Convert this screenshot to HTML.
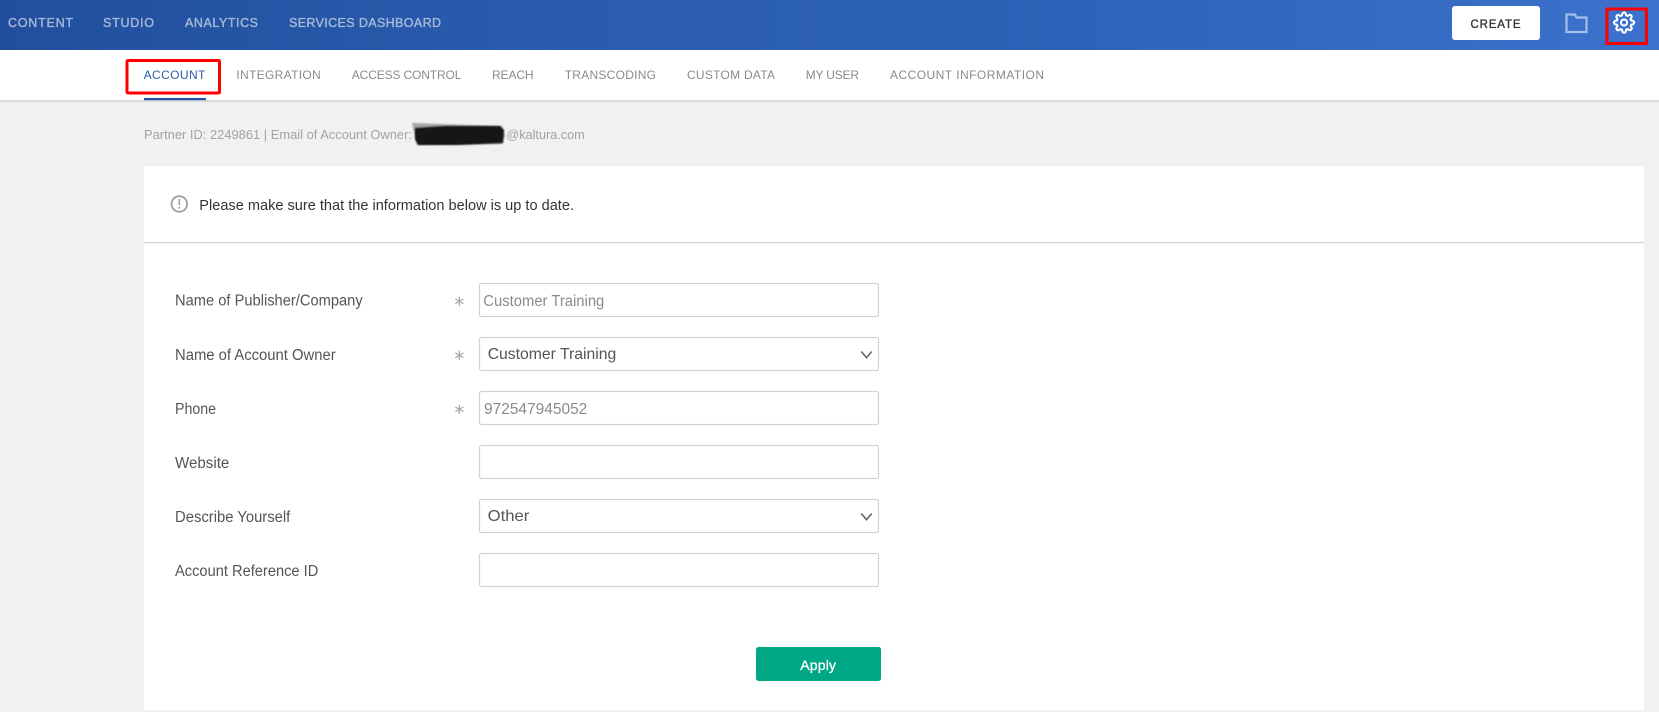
<!DOCTYPE html>
<html lang="en">
<head>
<meta charset="utf-8">
<title>Account Settings</title>
<style>
html,body{margin:0;padding:0;background:#f1f1f1;overflow:hidden;width:1659px;height:712px}
svg{display:block}
text{font-family:"Liberation Sans",Arial,sans-serif}
.top{font-size:12.5px;fill:#a8bad9;stroke:#a8bad9;stroke-width:.35}
.sub{font-size:12px;fill:#8a8a8a}
.lab{font-size:15.5px;fill:#555}
.val{font-size:15.5px;fill:#8a8a8a}
.sel{font-size:16px;fill:#555}
.inp{fill:#fff;stroke:#d2d2d2;stroke-width:1.200}
.ast{font-size:15px;fill:#aaa;font-family:"DejaVu Sans",sans-serif}
</style>
</head>
<body>
<svg width="1659" height="712" viewBox="0 0 1659 712" xmlns="http://www.w3.org/2000/svg">
<defs>
<linearGradient id="hd" x1="0" x2="1" y1="0" y2="0">
<stop offset="0" stop-color="#214f9e"/>
<stop offset=".35" stop-color="#2a5cae"/>
<stop offset=".65" stop-color="#2d63b8"/>
<stop offset="1" stop-color="#3c72cc"/>
</linearGradient>
<filter id="bl" x="-5%" y="-20%" width="110%" height="140%"><feGaussianBlur stdDeviation=".8"/></filter>
</defs>
<rect width="1659" height="712" fill="#f1f1f1"/>
<rect width="1659" height="50" fill="url(#hd)"/>
<text class="top" x="8" y="27" textLength="65" lengthAdjust="spacing">CONTENT</text>
<text class="top" x="103" y="27" textLength="51" lengthAdjust="spacing">STUDIO</text>
<text class="top" x="185" y="27" textLength="73" lengthAdjust="spacing">ANALYTICS</text>
<text class="top" x="289" y="27" textLength="152" lengthAdjust="spacing">SERVICES DASHBOARD</text>

<rect x="1452" y="6" width="88" height="34" rx="3" fill="#fff"/>
<text x="1470.5" y="28" font-size="11.5" fill="#333" stroke="#333" stroke-width=".35" textLength="50" lengthAdjust="spacing">CREATE</text>
<path d="M1566.5 14.500h8.500l1.500 3h10v14.500h-20z" fill="none" stroke="#a7bdea" stroke-width="2.200"/>
<g transform="translate(1613 11.500) scale(.92)" fill="none" stroke="#fff" stroke-width="2.300">
<circle cx="12" cy="12" r="3.300"/>
<path d="M19.400 15a1.650 1.650 0 0 0 .33 1.820l.06.06a2 2 0 0 1 0 2.830 2 2 0 0 1-2.830 0l-.06-.06a1.650 1.650 0 0 0-1.820-.33 1.650 1.650 0 0 0-1 1.510V21a2 2 0 0 1-2 2 2 2 0 0 1-2-2v-.09A1.650 1.650 0 0 0 9 19.400a1.650 1.650 0 0 0-1.820.33l-.06.06a2 2 0 0 1-2.830 0 2 2 0 0 1 0-2.830l.06-.06a1.650 1.650 0 0 0 .33-1.820 1.650 1.650 0 0 0-1.510-1H3a2 2 0 0 1-2-2 2 2 0 0 1 2-2h.09A1.650 1.650 0 0 0 4.600 9a1.650 1.650 0 0 0-.33-1.820l-.06-.06a2 2 0 0 1 0-2.830 2 2 0 0 1 2.830 0l.06.06a1.650 1.650 0 0 0 1.820.33H9a1.650 1.650 0 0 0 1-1.510V3a2 2 0 0 1 2-2 2 2 0 0 1 2 2v.09a1.650 1.650 0 0 0 1 1.510 1.650 1.650 0 0 0 1.820-.33l.06-.06a2 2 0 0 1 2.830 0 2 2 0 0 1 0 2.830l-.06.06a1.650 1.650 0 0 0-.33 1.820V9a1.650 1.650 0 0 0 1.510 1H21a2 2 0 0 1 2 2 2 2 0 0 1-2 2h-.09a1.650 1.650 0 0 0-1.510 1z"/>
</g>
<rect x="1607" y="9" width="39.500" height="34.500" fill="none" stroke="#f00" stroke-width="3"/>

<rect y="50" width="1659" height="50" fill="#fff"/>
<rect y="100" width="1659" height="2" fill="#dcdcdc"/>
<text class="sub" style="fill:#2f5ba8" x="143.600" y="79" textLength="61.800" lengthAdjust="spacing">ACCOUNT</text>
<text class="sub" x="236.400" y="79" textLength="84.300" lengthAdjust="spacing">INTEGRATION</text>
<text class="sub" x="351.800" y="79" textLength="109.600" lengthAdjust="spacing">ACCESS CONTROL</text>
<text class="sub" x="492" y="79" textLength="41.600" lengthAdjust="spacing">REACH</text>
<text class="sub" x="564.700" y="79" textLength="91.300" lengthAdjust="spacing">TRANSCODING</text>
<text class="sub" x="687" y="79" textLength="88" lengthAdjust="spacing">CUSTOM DATA</text>
<text class="sub" x="805.700" y="79" textLength="53.300" lengthAdjust="spacing">MY USER</text>
<text class="sub" x="890" y="79" textLength="154" lengthAdjust="spacing">ACCOUNT INFORMATION</text>
<rect x="144" y="98" width="62" height="2.200" fill="#2353a5"/>
<rect x="127" y="60.500" width="92.500" height="32.500" rx="1" fill="none" stroke="#f00" stroke-width="3"/>

<text x="144" y="139" font-size="13" fill="#a3a3a3" textLength="268" lengthAdjust="spacingAndGlyphs">Partner ID: 2249861 | Email of Account Owner:</text>
<text x="506.400" y="139" font-size="13" fill="#a3a3a3" textLength="78.300" lengthAdjust="spacingAndGlyphs">@kaltura.com</text>
<path d="M412 123l90 3 3 10-3 8-85 1z" fill="#666" opacity=".55" filter="url(#bl)"/>
<path d="M415 128l30-2 55 0 4 4-1 13-45 2-40 0-3-6z" fill="#141414" filter="url(#bl)"/>

<rect x="144" y="166" width="1500" height="544" fill="#fff"/>
<rect x="144" y="242" width="1500" height="1.200" fill="#d0d0d0"/>
<circle cx="179.300" cy="204" r="7.800" fill="none" stroke="#a0a0a0" stroke-width="1.800"/>
<rect x="178.500" y="199" width="1.600" height="6" fill="#a0a0a0"/>
<rect x="178.500" y="206.800" width="1.600" height="1.700" fill="#a0a0a0"/>
<text x="199.300" y="210" font-size="15" fill="#333" textLength="374.700" lengthAdjust="spacingAndGlyphs">Please make sure that the information below is up to date.</text>

<text class="lab" x="175" y="305.700" textLength="187.700" lengthAdjust="spacingAndGlyphs">Name of Publisher/Company</text>
<text class="lab" x="175" y="360" textLength="160.700" lengthAdjust="spacingAndGlyphs">Name of Account Owner</text>
<text class="lab" x="175" y="414" textLength="41" lengthAdjust="spacingAndGlyphs">Phone</text>
<text class="lab" x="175" y="468" textLength="54.300" lengthAdjust="spacingAndGlyphs">Website</text>
<text class="lab" x="175" y="522" textLength="115.300" lengthAdjust="spacingAndGlyphs">Describe Yourself</text>
<text class="lab" x="175" y="576" textLength="143.300" lengthAdjust="spacingAndGlyphs">Account Reference ID</text>

<text class="ast" x="459.300" y="306" text-anchor="middle">∗</text>
<text class="ast" x="459.300" y="360" text-anchor="middle">∗</text>
<text class="ast" x="459.300" y="414" text-anchor="middle">∗</text>

<rect class="inp" x="479.500" y="283.500" width="399" height="33" rx="2"/>
<rect class="inp" x="479.500" y="337.500" width="399" height="33" rx="2"/>
<rect class="inp" x="479.500" y="391.500" width="399" height="33" rx="2"/>
<rect class="inp" x="479.500" y="445.500" width="399" height="33" rx="2"/>
<rect class="inp" x="479.500" y="499.500" width="399" height="33" rx="2"/>
<rect class="inp" x="479.500" y="553.500" width="399" height="33" rx="2"/>

<text class="val" x="483.300" y="306" textLength="121" lengthAdjust="spacingAndGlyphs">Customer Training</text>
<text class="sel" x="487.700" y="359" textLength="128.600" lengthAdjust="spacingAndGlyphs">Customer Training</text>
<text class="val" x="484" y="414" textLength="103.300" lengthAdjust="spacingAndGlyphs">972547945052</text>
<text class="sel" x="487.700" y="521" textLength="41.600" lengthAdjust="spacingAndGlyphs">Other</text>

<path d="M861.200 351.500l5.300 6.200 5.300-6.200" fill="none" stroke="#666" stroke-width="1.600"/>
<path d="M861.200 513.500l5.300 6.200 5.300-6.200" fill="none" stroke="#666" stroke-width="1.600"/>

<rect x="756" y="647" width="125" height="34" rx="2.500" fill="#00a784"/>
<text x="800.300" y="670" font-size="14" fill="#fff" stroke="#fff" stroke-width=".3" textLength="35.700" lengthAdjust="spacing">Apply</text>
</svg>
</body>
</html>
